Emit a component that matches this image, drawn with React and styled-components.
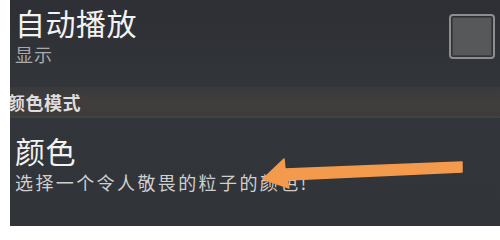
import React from "react";
import styled, { createGlobalStyle } from "styled-components";

const GlobalStyle = createGlobalStyle`
  html, body {
    margin: 0;
    padding: 0;
    background: #ffffff;
  }
  body {
    font-family: "Noto Sans CJK SC", "Noto Sans", sans-serif;
  }
`;

const Screen = styled.div`
  position: relative;
  width: 490px;
  height: 226px;
  margin-left: 10px;
  overflow: hidden;
  background: linear-gradient(180deg, #2d2f35 0%, #323539 40%, #313438 100%);
  display: flex;
  flex-direction: column;
`;

const PrefRow = styled.div`
  display: flex;
  align-items: flex-start;
  justify-content: space-between;
  height: ${({ h }) => h}px;
  padding: ${({ pt }) => pt}px 5px 0 5px;
  box-sizing: border-box;
`;

const TextCol = styled.div`
  display: flex;
  flex-direction: column;
`;

const Title = styled.div`
  font-size: 30px;
  line-height: 38px;
  color: #f2f2f2;
  letter-spacing: 0.5px;
`;

const Summary = styled.div`
  font-size: ${({ size }) => size}px;
  line-height: ${({ size }) => size + 4}px;
  color: ${({ color }) => color};
  letter-spacing: ${({ spacing }) => spacing}px;
  margin-top: ${({ mt }) => mt}px;
  white-space: nowrap;
`;

const CheckBox = styled.div`
  width: 46px;
  height: 45px;
  margin-top: 11px;
  box-sizing: border-box;
  border: 2px solid #8d8e90;
  border-radius: 4px;
  padding: 1px;
  display: flex;
`;

const CheckFill = styled.div`
  flex: 1;
  background: #575859;
  border: 1px solid #3f4042;
  border-radius: 1px;
`;

const SectionHeader = styled.div`
  height: 31px;
  box-sizing: border-box;
  background: linear-gradient(180deg, #3a3a3b 0%, #413d3d 60%, #3d3b3b 100%);
  border-bottom: 2px solid #40443f;
  display: flex;
  align-items: center;
  padding-top: 1px;
  font-size: 18px;
  font-weight: 700;
  color: #dedede;
  letter-spacing: 0.5px;
  text-indent: -3px;
  white-space: nowrap;
`;

const Arrow = styled.svg`
  position: absolute;
  left: 0;
  top: 0;
  pointer-events: none;
`;

export default function App() {
  return (
    <>
      <GlobalStyle />
      <Screen>
        <PrefRow h={87} pt={3}>
          <TextCol>
            <Title>自动播放</Title>
            <Summary size={18} color="#a8a9ab" spacing={1} mt={2}>
              显示
            </Summary>
          </TextCol>
          <CheckBox>
            <CheckFill />
          </CheckBox>
        </PrefRow>
        <SectionHeader>颜色模式</SectionHeader>
        <PrefRow h={108} pt={13}>
          <TextCol>
            <Title>颜色</Title>
            <Summary size={18} color="#cfcfd0" spacing={2.4} mt={2}>
              选择一个令人敬畏的粒子的颜色!
            </Summary>
          </TextCol>
        </PrefRow>
        <Arrow width="490" height="226" viewBox="0 0 490 226">
          <path
            d="M452 162 L452 172 L277 180 L279 188 L253 179 L274 159 L275 169 Z"
            fill="#f39a4d"
            stroke="#f39a4d"
            strokeWidth="1.5"
            strokeLinejoin="round"
          />
        </Arrow>
      </Screen>
    </>
  );
}
